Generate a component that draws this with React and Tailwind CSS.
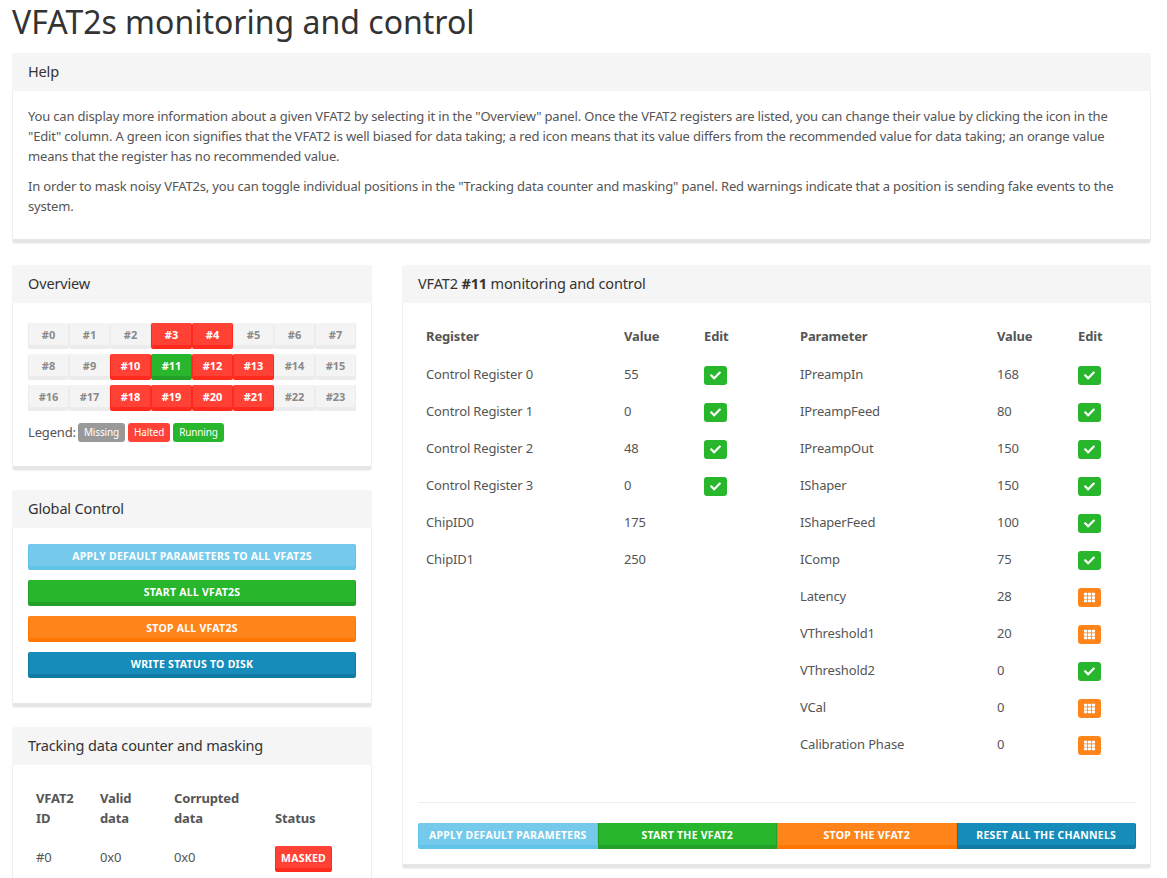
import React from "react";
import { FaCheck, FaTh } from "react-icons/fa";

const variants = {
  def: "bg-[#f4f4f4] border-[#ececec] text-[#8a8a8a]",
  red: "bg-[#ff4136] border-[#ff2a1e] text-white",
  green: "bg-[#28b62c] border-[#23a027] text-white",
  orange: "bg-[#ff851b] border-[#ff7702] text-white",
  blue: "bg-[#158cba] border-[#127ba3] text-white",
  info: "bg-[#75caeb] border-[#61c3e8] text-white",
};

function Panel({ title, className = "", bodyClass = "", children }) {
  return (
    <section className={`bg-white rounded-[4px] border-x border-[#eeeeee] border-b-[4px] border-b-[#e6e6e6] shadow-[0_1px_1px_rgba(0,0,0,0.06)] ${className}`}>
      <h3 className="h-[38px] -mx-px px-4 pb-[3px] flex items-center bg-[#f5f5f5] rounded-t-[4px] text-[14.5px] text-[#333]">{title}</h3>
      <div className={bodyClass}>{children}</div>
    </section>
  );
}

const halted = [3, 4, 10, 12, 13, 18, 19, 20, 21];

function Chip({ n }) {
  const v = n === 11 ? variants.green : halted.includes(n) ? variants.red : variants.def;
  return (
    <div className={`h-[26px] border-x border-b-[4px] rounded-[2px] flex items-center justify-center pt-[2px] text-[11px] font-bold tracking-normal ${v}`}>#{n}</div>
  );
}

function WideBtn({ v, children }) {
  return (
    <button className={`w-full h-[26px] rounded-[2px] border-x border-b-[4px] pt-[2px] flex items-center justify-center text-[10.5px] font-bold uppercase tracking-[0.25px] ${variants[v]}`}>{children}</button>
  );
}

function Edit({ kind }) {
  const orange = kind === "o";
  return (
    <span className={`mt-[3px] w-[23px] h-[19px] rounded-[3px] flex items-center justify-center text-white text-[11px] ${orange ? "bg-[#ff851b]" : "bg-[#28b62c]"}`}>
      {orange ? <FaTh /> : <FaCheck />}
    </span>
  );
}

function Row({ cols, name, value, edit }) {
  return (
    <div className={`grid ${cols} h-[37px] items-center pl-2`}>
      <span>{name}</span>
      <span>{value}</span>
      <span>{edit ? <Edit kind={edit} /> : null}</span>
    </div>
  );
}

const regs = [
  ["Control Register 0", 55, "g"],
  ["Control Register 1", 0, "g"],
  ["Control Register 2", 48, "g"],
  ["Control Register 3", 0, "g"],
  ["ChipID0", 175],
  ["ChipID1", 250],
];
const params = [
  ["IPreampIn", 168, "g"],
  ["IPreampFeed", 80, "g"],
  ["IPreampOut", 150, "g"],
  ["IShaper", 150, "g"],
  ["IShaperFeed", 100, "g"],
  ["IComp", 75, "g"],
  ["Latency", 28, "o"],
  ["VThreshold1", 20, "o"],
  ["VThreshold2", 0, "g"],
  ["VCal", 0, "o"],
  ["Calibration Phase", 0, "o"],
];

function DataTable({ cols, head, rows, className }) {
  return (
    <div className={className}>
      <div className={`grid ${cols} h-[37px] pb-[2px] items-center pl-2 font-bold`}>
        {head.map((h, i) => <span key={i}>{h}</span>)}
      </div>
      {rows.map((r) => <Row key={r[0]} cols={cols} name={r[0]} value={r[1]} edit={r[2]} />)}
    </div>
  );
}

export default function App() {
  return (
    <div className="h-[878px] overflow-hidden px-3 bg-white text-[13px] leading-[20px] tracking-[-0.15px] text-[#555] [font-family:'Noto_Sans',sans-serif]">
      <h1 className="h-[53px] text-[32px] leading-[44px] tracking-normal text-[#333]">VFAT2s monitoring and control</h1>

      <Panel title="Help" className="w-[1139px]" bodyClass="h-[148px] px-[15px] pt-[15px] tracking-[-0.175px]">
        <p className="mb-[10px]">You can display more information about a given VFAT2 by selecting it in the "Overview" panel. Once the VFAT2 registers are listed, you can change their value by clicking the icon in the "Edit" column. A green icon signifies that the VFAT2 is well biased for data taking; a red icon means that its value differs from the recommended value for data taking; an orange value means that the register has no recommended value.</p>
        <p>In order to mask noisy VFAT2s, you can toggle individual positions in the "Tracking data counter and masking" panel. Red warnings indicate that a position is sending fake events to the system.</p>
      </Panel>

      <div className="mt-[22px] flex items-start gap-[30px] w-[1139px]">
        <div className="w-[360px] shrink-0 flex flex-col gap-[20px]">
          <Panel title="Overview" bodyClass="h-[163px] px-[15px] pt-5">
            <div className="grid grid-cols-8 gap-y-[5px]">
              {Array.from({ length: 24 }, (_, i) => <Chip key={i} n={i} />)}
            </div>
            <div className="mt-[11px] flex items-center gap-[3px]">
              <span className="-mr-px">Legend:</span>
              <span className="h-[19px] px-[6px] rounded-[3px] bg-[#999] text-white text-[10px] flex items-center">Missing</span>
              <span className="h-[19px] px-[6px] rounded-[3px] bg-[#ff4136] text-white text-[10px] flex items-center">Halted</span>
              <span className="h-[19px] px-[6px] rounded-[3px] bg-[#28b62c] text-white text-[10px] flex items-center">Running</span>
            </div>
          </Panel>

          <Panel title="Global Control" bodyClass="h-[175px] px-[15px] pt-[16px] flex flex-col gap-[10px]">
            <WideBtn v="info">Apply default parameters to all VFAT2s</WideBtn>
            <WideBtn v="green">Start all VFAT2s</WideBtn>
            <WideBtn v="orange">Stop all VFAT2s</WideBtn>
            <WideBtn v="blue">Write status to disk</WideBtn>
          </Panel>

          <Panel title="Tracking data counter and masking" bodyClass="px-[15px] pt-[23px] pb-[40px]">
            <div className="grid grid-cols-[64px_74px_101px_1fr] pl-2 font-bold items-end">
              <span>VFAT2<br />ID</span>
              <span>Valid<br />data</span>
              <span>Corrupted<br />data</span>
              <span>Status</span>
            </div>
            <div className="grid grid-cols-[64px_74px_101px_1fr] pl-2 mt-[18px] items-start">
              <span className="pt-px">#0</span>
              <span className="pt-px">0x0</span>
              <span className="pt-px">0x0</span>
              <span className={`w-[57px] h-[26px] border-x border-b-[4px] rounded-[2px] flex items-center justify-center pt-[2px] text-[10.5px] font-bold uppercase tracking-[0.25px] ${variants.red}`}>Masked</span>
            </div>
          </Panel>
        </div>

        <Panel title={<span>VFAT2 <b>#11</b> monitoring and control</span>} className="flex-1" bodyClass="pl-[15px] pr-[14px] pt-[15px] pb-[15px]">
          <div className="flex h-[485px] border-b border-[#eeeeee]">
            <DataTable className="w-[374px] shrink-0" cols="grid-cols-[198px_80px_1fr]" head={["Register", "Value", "Edit"]} rows={regs} />
            <DataTable className="flex-1" cols="grid-cols-[197px_81px_1fr]" head={["Parameter", "Value", "Edit"]} rows={params} />
          </div>
          <div className="mt-[20px] grid grid-cols-4">
            {[
              ["info", "Apply default parameters", "rounded-l-[2px]"],
              ["green", "Start the VFAT2", ""],
              ["orange", "Stop the VFAT2", ""],
              ["blue", "Reset all the channels", "rounded-r-[2px]"],
            ].map(([v, t, r]) => (
              <button key={t} className={`h-[26px] border-x border-b-[4px] pt-[2px] flex items-center justify-center text-[10.5px] font-bold uppercase tracking-[0.25px] ${variants[v]} ${r}`}>{t}</button>
            ))}
          </div>
        </Panel>
      </div>
    </div>
  );
}
